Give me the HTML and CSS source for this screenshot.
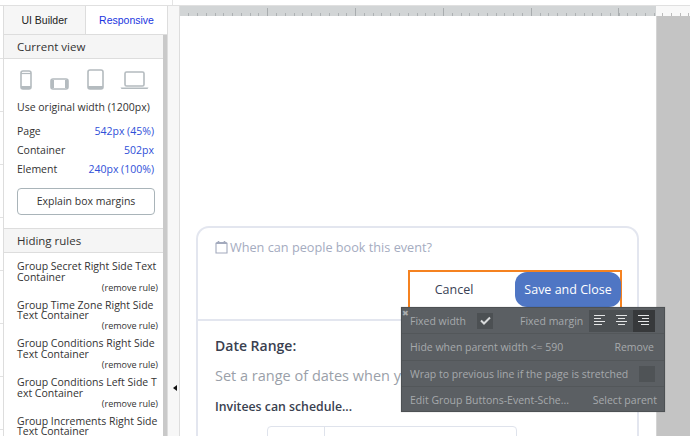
FILE: index.html
```html
<!DOCTYPE html>
<html lang="en">
<head>
<meta charset="utf-8">
<title>Responsive editor</title>
<link rel="stylesheet" href="styles.css">
</head>
<body>
<div class="topbar"></div>
<div class="main">
  <div class="strip"></div>
  <aside class="panel">
    <div class="tabs">
      <div class="tab">UI Builder</div>
      <div class="tab tab-active">Responsive</div>
    </div>
    <div class="panel-body">
      <div class="panel-content">
        <div class="section-title">Current view</div>
        <div class="devices">
          <svg class="dev" width="12" height="20" viewBox="0 0 12 20"><rect x="1" y="1" width="10" height="18" rx="2" fill="none" stroke="#b4bbbf" stroke-width="1.6"/><path d="M1 3.5h10" stroke="#b4bbbf" stroke-width="1.2"/><path d="M1 16h10v2a1 1 0 0 1-1 1H2a1 1 0 0 1-1-1z" fill="#b4bbbf"/></svg>
          <svg class="dev" width="19" height="12" viewBox="0 0 19 12"><rect x="1" y="1" width="17" height="10" rx="2" fill="none" stroke="#b4bbbf" stroke-width="1.6"/><path d="M1 2h3v8H1zM15 2h3v8h-3z" fill="#b4bbbf"/></svg>
          <svg class="dev" width="17" height="21" viewBox="0 0 17 21"><rect x="1" y="1" width="15" height="19" rx="2" fill="none" stroke="#b4bbbf" stroke-width="1.6"/><path d="M1 17h15v2a1 1 0 0 1-1 1H2a1 1 0 0 1-1-1z" fill="#b4bbbf"/></svg>
          <svg class="dev" width="29" height="19" viewBox="0 0 29 19"><rect x="5" y="1" width="19" height="14" rx="1.5" fill="none" stroke="#b4bbbf" stroke-width="1.6"/><path d="M0.5 16.5h28l-1 1.5h-26z" fill="#b4bbbf"/></svg>
        </div>
        <div class="orig">Use original width (1200px)</div>
        <div class="metric"><span>Page</span><span class="val">542px (45%)</span></div>
        <div class="metric"><span>Container</span><span class="val">502px</span></div>
        <div class="metric"><span>Element</span><span class="val">240px (100%)</span></div>
        <div class="explain">Explain box margins</div>
        <div class="section-title section-rules">Hiding rules</div>
        <div class="rules">
          <div class="rule"><div class="rule-name">Group Secret Right Side Text Container</div><div class="rule-remove">(remove rule)</div></div>
          <div class="rule"><div class="rule-name">Group Time Zone Right Side Text Container</div><div class="rule-remove">(remove rule)</div></div>
          <div class="rule"><div class="rule-name">Group Conditions Right Side Text Container</div><div class="rule-remove">(remove rule)</div></div>
          <div class="rule"><div class="rule-name">Group Conditions Left Side T<br>ext Container</div><div class="rule-remove">(remove rule)</div></div>
          <div class="rule"><div class="rule-name">Group Increments Right Side Text Container</div></div>
        </div>
      </div>
      <div class="scrollbar"></div>
    </div>
  </aside>
  <div class="gutter"><span class="collapse"></span></div>
  <div class="stage">
    <div class="rulers">
      <div class="ruler ruler-page"></div>
      <div class="ruler ruler-out"></div>
    </div>
    <div class="canvas">
      <div class="page">
        <div class="card">
          <div class="card-top">
            <div class="card-heading">
              <svg width="13" height="14" viewBox="0 0 13 14"><path d="M1 3.5h11v9.500H1zM1 3.5a1 1 0 0 1 1-1h9a1 1 0 0 1 1 1" fill="none" stroke="#a3aabd" stroke-width="1.1"/><path d="M3.500 1v3M9.500 1v3" stroke="#a3aabd" stroke-width="1.600"/></svg>
              <span>When can people book this event?</span>
            </div>
            <div class="buttons-row">
              <div class="buttons">
                <div class="cancel">Cancel</div>
                <div class="save">Save and Close</div>
              </div>
            </div>
          </div>
          <div class="card-bottom">
            <div class="date-title">Date Range:</div>
            <div class="date-sub">Set a range of dates when you can accept meetings.</div>
            <div class="invitees">Invitees can schedule...</div>
            <div class="field"><div class="field-left"></div><div class="field-right"></div></div>
          </div>
        </div>
      </div>
      <div class="outside"></div>
    </div>
    <div class="popup">
      <span class="popup-close">&#10006;</span>
      <div class="pop-row">
        <span class="pop-label">Fixed width</span>
        <span class="check"><svg width="11" height="9" viewBox="0 0 11 9"><path d="M1 4.500l3 3 6-6" fill="none" stroke="#d8dadb" stroke-width="2"/></svg></span>
        <span class="pop-margin">Fixed margin</span>
        <span class="aligns">
          <span class="align"><svg width="12" height="11" viewBox="0 0 12 11"><path d="M0 .5h11M0 3.500h7M0 6.500h11M0 9.500h8" stroke="#e4e5e6"/></svg></span>
          <span class="align"><svg width="12" height="11" viewBox="0 0 12 11"><path d="M0 .5h11M2 3.500h7M0 6.500h11M2 9.500h7" stroke="#e4e5e6"/></svg></span>
          <span class="align align-on"><svg width="12" height="11" viewBox="0 0 12 11"><path d="M0 .5h11M4 3.500h7M0 6.500h11M3 9.500h8" stroke="#e4e5e6"/></svg></span>
        </span>
      </div>
      <div class="pop-row pop-between pop-tall"><span>Hide when parent width &lt;= 590</span><span class="pop-action">Remove</span></div>
      <div class="pop-row pop-between"><span>Wrap to previous line if the page is stretched</span><span class="box"></span></div>
      <div class="pop-row pop-between pop-last"><span>Edit Group Buttons-Event-Sche...</span><span>Select parent</span></div>
    </div>
  </div>
</div>
</body>
</html>
```
FILE: styles.css
```css
* { box-sizing: border-box; }
html, body { margin: 0; padding: 0; }
body {
  width: 690px;
  height: 436px;
  overflow: hidden;
  background: #fff;
  font-family: "Open Sans", sans-serif;
  color: #333;
}
.topbar {
  height: 6px;
  border-bottom: 1px solid #e0e0e0;
  background: linear-gradient(90deg, #fff 172px, #e4e4e4 172px, #e4e4e4 173px, #fff 173px);
}
.main { display: flex; height: 430px; }
.strip {
  width: 4px;
  border-right: 1px solid #ddd;
  background: repeating-linear-gradient(180deg, #fff 0, #fff 52px, #e2e2e2 52px, #e2e2e2 53px);
}
.panel { width: 163px; display: flex; flex-direction: column; background: #fff; }
.tabs { display: flex; height: 29px; border-bottom: 1px solid #ddd; }
.tab {
  width: 82px;
  background: #f6f6f6;
  border-right: 1px solid #ddd;
  font: 10.500px/28px "Liberation Sans", sans-serif;
  color: #222;
  text-align: center;
}
.tab-active { width: 81px; background: #fff; color: #1a35e0; border-right: 0; }
.panel-body { display: flex; flex: 1; min-height: 0; overflow: hidden; }
.panel-content { width: 159px; flex: none; }
.scrollbar { width: 4px; background: #c9c9c9; }
.section-title {
  height: 24px;
  padding-left: 13px;
  background: #f5f5f5;
  border-bottom: 1px solid #ddd;
  font-size: 11.500px;
  line-height: 23px;
  color: #333;
}
.devices { display: flex; align-items: flex-end; height: 32px; padding: 0 0 1px 16px; }
.dev { flex: none; display: block; }
.dev:nth-child(1) { margin-right: 18px; }
.dev:nth-child(2) { margin-right: 18px; }
.dev:nth-child(3) { margin-right: 16px; }
.orig { padding-left: 13px; margin-top: 9px; font-size: 10.500px; line-height: 15px; color: #333; }
.metric {
  display: flex;
  justify-content: space-between;
  padding: 0 9px 0 13px;
  margin-top: 4px;
  font-size: 10.500px;
  line-height: 15px;
  color: #333;
}
.orig + .metric { margin-top: 9px; }
.val { color: #2f4fd8; }
.explain {
  width: 138px;
  height: 27px;
  margin: 11px 0 0 13px;
  border: 1px solid #a9b4b9;
  border-radius: 4px;
  text-align: center;
  font-size: 10.500px;
  line-height: 24px;
  color: #333;
}
.section-rules { margin-top: 13px; height: 25px; border-top: 1px solid #ddd; line-height: 23px; }
.rules { padding-top: 8px; }
.rule { padding: 0 0 0 13px; margin-bottom: 7.200px; }
.rule-name { font-size: 10.500px; line-height: 10.500px; color: #333; width: 142px; }
.rule-remove { margin-top: 0.500px; font-size: 9px; line-height: 10px; padding-right: 5px; text-align: right; color: #333; white-space: nowrap; }
.gutter {
  width: 13px;
  padding: 379px 0 0 5px;
  background: #f7f7f7;
  border-left: 1px solid #ddd;
  border-right: 1px solid #ddd;
}
.collapse {
  display: block;
  width: 0;
  height: 0;
  border-style: solid;
  border-width: 3.500px 4px 3.500px 0;
  border-color: transparent #111 transparent transparent;
}
.stage { position: relative; flex: 1; display: flex; flex-direction: column; min-width: 0; }
.rulers { display: flex; height: 10px; }
.ruler { background-repeat: repeat-x; }
.ruler-page {
  width: 476px;
  background-color: #d2d5d6;
  background-image:
    repeating-linear-gradient(90deg, #a9adaf 0, #a9adaf 1px, transparent 1px, transparent 87.850px),
    repeating-linear-gradient(90deg, #aeb2b4 0, #aeb2b4 1px, transparent 1px, transparent 8.785px);
  background-size: 100% 8px, 100% 3px;
  background-position: 0 100%, 0 100%;
  background-position-x: 87px, -0.600px;
  background-repeat: no-repeat;
}
.ruler-out {
  flex: 1;
  background-color: #f8f8f8;
  background-image: repeating-linear-gradient(90deg, #bbb 0, #bbb 1px, transparent 1px, transparent 8.785px);
  background-size: 100% 3px;
  background-position: 6px 100%;
  background-repeat: no-repeat;
}
.canvas { display: flex; flex: 1; min-height: 0; }
.page { width: 476px; padding: 210px 17px 0 16px; background: #fff; overflow: hidden; }
.outside { flex: 1; background: #c4c4c4; border-left: 1px solid #d4d4d4; }
.card { border: 2px solid #e3e6ef; border-radius: 13px 13px 0 0; border-bottom: 0; height: 240px; }
.card-top { height: 93px; border-bottom: 2px solid #e3e6ef; padding: 11px 0 0 17px; }
.card-heading { display: flex; align-items: center; gap: 2px; height: 16px; font-size: 12.700px; font-weight: 500; color: #a5acbf; }
.buttons-row { display: flex; justify-content: flex-end; margin: 15px 15px 0 0; }
.buttons {
  display: flex;
  justify-content: space-between;
  align-items: flex-start;
  width: 214px;
  height: 50px;
  border: 2px solid #f58220;
  border-bottom: 0;
}
.cancel { width: 88px; text-align: center; font-size: 12.500px; font-weight: 500; line-height: 35px; color: #3a4255; }
.save {
  width: 106px;
  height: 35px;
  margin-right: -1px;
  background: #4f76c4;
  border-radius: 12px;
  text-align: center;
  font-size: 12.500px;
  font-weight: 500;
  line-height: 35px;
  color: #fff;
}
.card-bottom { padding: 15px 0 0 17px; }
.date-title { font-size: 14px; font-weight: 600; line-height: 20px; color: #39404f; }
.date-sub { margin-top: 10px; font-size: 14.500px; line-height: 20px; color: #9a9fa9; white-space: nowrap; }
.invitees { margin-top: 12px; font-size: 12.300px; font-weight: 600; line-height: 18px; color: #39404f; }
.field {
  display: flex;
  width: 250px;
  height: 30px;
  margin: 10px 0 0 52px;
  border: 1px solid #dfe3ec;
  border-radius: 4px;
}
.field-left { width: 57px; border-right: 1px solid #dfe3ec; }
.field-right { flex: 1; }
.popup {
  position: absolute;
  left: 221px;
  top: 301px;
  width: 264px;
  height: 105px;
  background: #5b5f63;
  border: 1px solid #4d5154;
  color: #a6a9ac;
  font-size: 10.500px;
  box-shadow: 0 0 1px rgba(0,0,0,.3);
}
.popup-close {
  position: absolute;
  left: 0;
  top: 0;
  font-size: 8px;
  line-height: 10px;
  color: #a9acae;
}
.pop-row {
  display: flex;
  align-items: center;
  height: 26px;
  padding: 0 7px 0 8px;
  border-bottom: 1px solid #53575a;
  white-space: nowrap;
}
.pop-tall { height: 27px; }
.pop-last { border-bottom: 0; }
.pop-between { justify-content: space-between; }
.pop-action { margin-right: 3px; }
.check {
  display: flex;
  align-items: center;
  justify-content: center;
  width: 16px;
  height: 16px;
  margin-left: 11px;
  background: #4c5053;
}
.pop-margin { margin-left: 27px; }
.aligns { display: flex; margin-left: 6px; background: #4c5053; }
.align { display: flex; align-items: center; justify-content: center; width: 22px; height: 22px; }
.align-on { background: #37393b; }
.box { width: 16px; height: 16px; margin-right: 2px; background: #4f5356; }
```
